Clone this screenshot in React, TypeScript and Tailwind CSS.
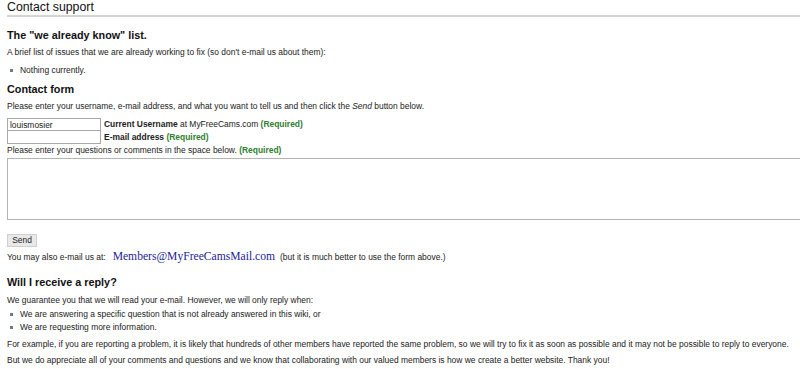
import React from "react";

const REQ = "font-bold text-[#2f7d2f]";

function Bullet({ children }: { children: React.ReactNode }) {
  return (
    <li className="flex items-center leading-[13px]">
      <span className="ml-[3px] mr-[7px] inline-block h-[3px] w-[3px] bg-[#6b7a8c]" />
      <span>{children}</span>
    </li>
  );
}

export default function App() {
  return (
    <div
      className="min-h-[369px] w-[800px] overflow-hidden bg-white pl-[7px] text-[8.45px] text-[#222]"
      style={{ fontFamily: '"Liberation Sans", Arial, sans-serif' }}
    >
      <h1 className="h-[17px] border-b-2 border-[#d4d4d4] text-[12.3px] leading-[15px] text-[#111]">
        Contact support
      </h1>

      <h2 className="mt-[11px] text-[10.8px] font-bold leading-[14px] text-[#111]">
        The "we already know" list.
      </h2>
      <p className="mt-[4px] leading-[12px]">
        A brief list of issues that we are already working to fix (so don't e-mail us about them):
      </p>
      <ul className="mt-[6px] leading-[12px]">
        <Bullet>Nothing currently.</Bullet>
      </ul>

      <h2 className="mt-[5px] text-[10.8px] font-bold leading-[14px] text-[#111]">Contact form</h2>
      <p className="mt-[4px] leading-[12px]">
        Please enter your username, e-mail address, and what you want to tell us and then click the{" "}
        <i>Send</i> button below.
      </p>

      <div className="mt-[6px] flex flex-col">
        <div className="flex h-[13px] items-center">
          <input
            defaultValue="louismosier"
            className="h-[13px] w-[94px] border border-[#a8a8a8] px-[2px] text-[8.45px] text-[#222] outline-none"
          />
          <span className="ml-[3px]">
            <b>Current Username</b> at MyFreeCams.com <span className={REQ}>(Required)</span>
          </span>
        </div>
        <div className="flex h-[13px] items-center">
          <input className="h-[13px] w-[94px] border border-t-0 border-[#a8a8a8] px-[2px] text-[8.45px] outline-none" />
          <span className="ml-[3px]">
            <b>E-mail address</b> <span className={REQ}>(Required)</span>
          </span>
        </div>
      </div>
      <p className="leading-[12px]">
        Please enter your questions or comments in the space below. <span className={REQ}>(Required)</span>
      </p>
      <textarea className="mt-[2px] block h-[62px] w-[800px] resize-none border border-[#b4b4b4] outline-none" />

      <button className="mt-[14px] block h-[13px] w-[30px] border border-[#cfcfcf] bg-[#e9e9e9] text-[8.45px] leading-[11px] text-[#222]">
        Send
      </button>

      <p className="mt-[3px] flex h-[14px] items-center">
        <span>You may also e-mail us at:</span>
        <span
          className="ml-[7px] mr-[5px] text-[11.6px] text-[#1c1c92]"
          style={{ fontFamily: '"Liberation Serif", "Times New Roman", serif' }}
        >
          Members@MyFreeCamsMail.com
        </span>
        <span>(but it is much better to use the form above.)</span>
      </p>

      <h2 className="mt-[11px] text-[10.8px] font-bold leading-[14px] text-[#111]">
        Will I receive a reply?
      </h2>
      <p className="mt-[5px] leading-[12px]">
        We guarantee you that we will read your e-mail. However, we will only reply when:
      </p>
      <ul className="mt-[2px]">
        <Bullet>We are answering a specific question that is not already answered in this wiki, or</Bullet>
        <Bullet>We are requesting more information.</Bullet>
      </ul>
      <p className="mt-[4px] leading-[12px] whitespace-nowrap">
        For example, if you are reporting a problem, it is likely that hundreds of other members have reported
        the same problem, so we will try to fix it as soon as possible and it may not be possible to reply to
        everyone.
      </p>
      <p className="mt-[4px] leading-[12px]">
        But we do appreciate all of your comments and questions and we know that collaborating with our valued
        members is how we create a better website. Thank you!
      </p>
    </div>
  );
}
